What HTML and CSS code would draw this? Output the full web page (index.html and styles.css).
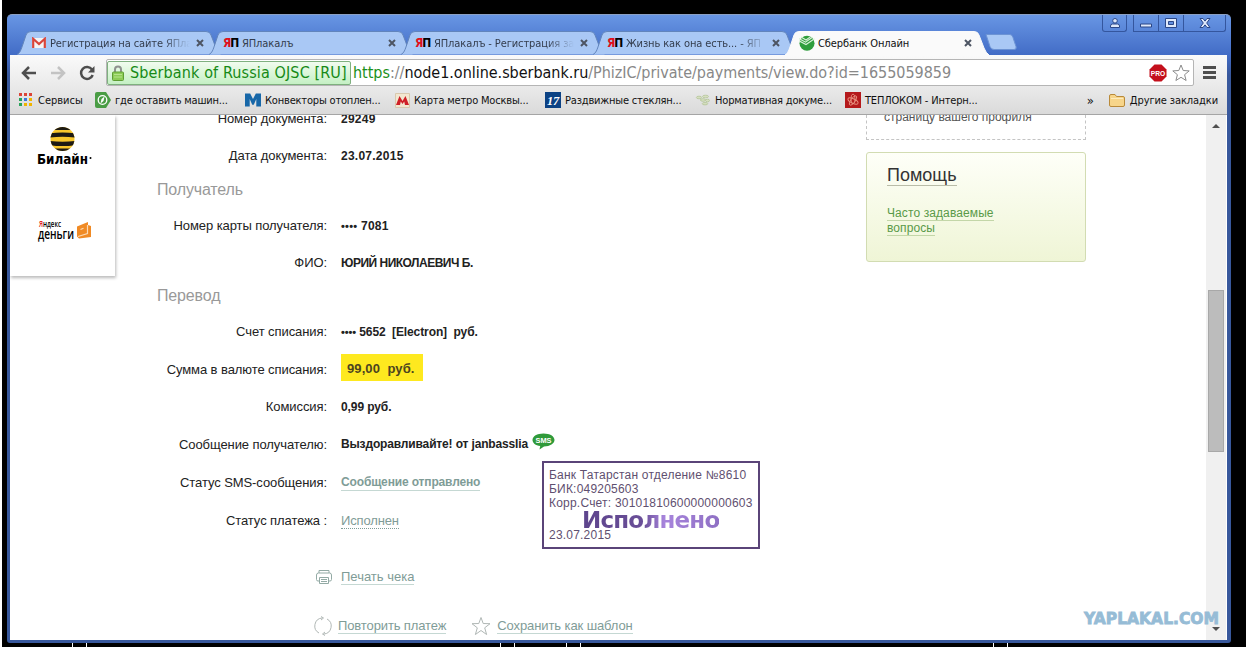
FILE: index.html
```html
<!DOCTYPE html>
<html lang="ru">
<head>
  <meta charset="UTF-8">
  <title>Сбербанк Онлайн</title>
  <link rel="stylesheet" href="styles.css">
</head>
<body>
  <div class="desktop">
    <div class="window">
      <header class="titlebar">
        <nav class="tabs">
          <div class="tab">
            <svg class="tab-bg" viewBox="0 0 206 24" width="206" height="24"><path d="M1 23.500C4 22 5 19 7 13L10 4Q11 .5 15 .5H190Q194 .5 195 4L200 17Q202 22 205 23.500"/></svg>
            <svg class="favicon" viewBox="0 0 14 12" width="14" height="12"><path fill="#f4f4f4" d="M0 1h14v10H0z"/><path fill="none" stroke="#d9453b" stroke-width="2.200" d="M1.200 11V1.800L7 7l5.800-5.200V11"/></svg>
            <span class="tab-title fade">Регистрация на сайте ЯПла</span>
            <svg class="close" viewBox="0 0 8 8" width="8" height="8"><path d="M1 1l6 6M7 1L1 7"/></svg>
          </div>
          <div class="tab">
            <svg class="tab-bg" viewBox="0 0 206 24" width="206" height="24"><path d="M1 23.500C4 22 5 19 7 13L10 4Q11 .5 15 .5H190Q194 .5 195 4L200 17Q202 22 205 23.500"/></svg>
            <span class="favicon yap"><b>Я</b>П</span>
            <span class="tab-title">ЯПлакалъ</span>
            <svg class="close" viewBox="0 0 8 8" width="8" height="8"><path d="M1 1l6 6M7 1L1 7"/></svg>
          </div>
          <div class="tab">
            <svg class="tab-bg" viewBox="0 0 206 24" width="206" height="24"><path d="M1 23.500C4 22 5 19 7 13L10 4Q11 .5 15 .5H190Q194 .5 195 4L200 17Q202 22 205 23.500"/></svg>
            <span class="favicon yap"><b>Я</b>П</span>
            <span class="tab-title fade">ЯПлакалъ - Регистрация за</span>
            <svg class="close" viewBox="0 0 8 8" width="8" height="8"><path d="M1 1l6 6M7 1L1 7"/></svg>
          </div>
          <div class="tab">
            <svg class="tab-bg" viewBox="0 0 206 24" width="206" height="24"><path d="M1 23.500C4 22 5 19 7 13L10 4Q11 .5 15 .5H190Q194 .5 195 4L200 17Q202 22 205 23.500"/></svg>
            <span class="favicon yap"><b>Я</b>П</span>
            <span class="tab-title fade">Жизнь как она есть... - ЯП</span>
            <svg class="close" viewBox="0 0 8 8" width="8" height="8"><path d="M1 1l6 6M7 1L1 7"/></svg>
          </div>
          <div class="tab active">
            <svg class="tab-bg" viewBox="0 0 206 24" width="206" height="24"><path d="M1 24C4 22 5 19 7 13L10 4Q11 .5 15 .5H190Q194 .5 195 4L200 17Q202 22 205 24"/></svg>
            <svg class="favicon" viewBox="0 0 16 16" width="16" height="16"><circle cx="8" cy="8.300" r="7.500" fill="#2f9e3d"/><path fill="none" stroke="#d8f0d8" stroke-width="1.100" d="M0 3.500l6.500 3.700 7-5M2 2l5 3 5-3.600M0 5.800l7 3.700 8.500-5.800"/></svg>
            <span class="tab-title">Сбербанк Онлайн</span>
            <svg class="close" viewBox="0 0 8 8" width="8" height="8"><path d="M1 1l6 6M7 1L1 7"/></svg>
          </div>
          <svg class="new-tab" viewBox="0 0 32 16" width="32" height="16"><path d="M1 .5h24q2 0 3 3l3 9q1 3-2 3H9q-3 0-4-3z"/></svg>
        </nav>
        <div class="controls">
          <span class="control user"><svg viewBox="0 0 10 10" width="10" height="10"><circle cx="5" cy="2.800" r="2.300"/><path d="M.5 9.500V8q0-2 2-2h5q2 0 2 2v1.500z"/></svg></span>
          <span class="control"><svg viewBox="0 0 12 10" width="12" height="10"><path d="M.5 6h11v3H.5z"/></svg></span>
          <span class="control"><svg viewBox="0 0 12 10" width="12" height="10"><path fill-rule="evenodd" d="M.5.500h11v9H.5zM3.500 3.500v3h5v-3z"/></svg></span>
          <span class="control last"><svg viewBox="0 0 12 10" width="12" height="10"><path d="M1 .5h3l2 2.600L8 .5h3L7.700 5 11 9.500H8L6 6.900 4 9.500H1L4.300 5z"/></svg></span>
        </div>
      </header>

      <div class="toolbar">
        <svg class="nav-icon back" viewBox="0 0 16 14" width="16" height="14"><path d="M15 7H2M8 1L2 7l6 6"/></svg>
        <svg class="nav-icon forward" viewBox="0 0 16 14" width="16" height="14"><path d="M1 7h13M8 1l6 6-6 6"/></svg>
        <svg class="nav-icon reload" viewBox="0 0 16 16" width="16" height="16"><path d="M13 4.500A6 6 0 1 0 13.700 10"/><path class="solid" d="M15.500 1v6.500H9z"/></svg>
        <div class="address">
          <span class="cert">
            <svg viewBox="0 0 12 16" width="12" height="16"><path fill="none" stroke="#8f938f" stroke-width="2" d="M3 8V4.500a3 3 0 0 1 6 0V8"/><rect x=".5" y="7" width="11" height="8.500" rx="1" fill="#8ccc55" stroke="#5e9e34"/><path stroke="#b5e38a" d="M2 9.500h8M2 12h8"/></svg>
            <span class="cert-name">Sberbank of Russia OJSC [RU]</span>
          </span>
          <span class="url"><span class="scheme">https</span><span class="slashes">://</span><span class="host">node1.online.sberbank.ru</span><span class="path">/PhizIC/private/payments/view.do?id=1655059859</span></span>
          <svg class="pro" viewBox="0 0 18 18" width="18" height="18"><path fill="#c4101c" d="M5.500.500h7l5 5v7l-5 5h-7l-5-5v-7z"/><text x="1.800" y="11.800" textLength="14.400" lengthAdjust="spacingAndGlyphs">PRO</text></svg>
          <svg class="star" viewBox="0 0 18 18" width="18" height="18"><path d="M9 1l2.200 5.500 6 .4-4.600 3.800 1.500 5.800L9 13.300l-5.100 3.200 1.500-5.800L.8 6.900l6-.4z"/></svg>
        </div>
        <div class="menu"><i></i><i></i><i></i></div>
      </div>

      <div class="bookmarks">
        <a class="mark apps"><svg viewBox="0 0 14 14" width="14" height="14"><path fill="#dc4437" d="M0 0h3v3H0zM5 0h3v3H5zM10 0h3v3h-3z"/><path fill="#29a35b" d="M0 5h3v3H0zM0 10h3v3H0z"/><path fill="#3b78d8" d="M5 5h3v3H5z"/><path fill="#f0b400" d="M10 5h3v3h-3zM5 10h3v3H5zM10 10h3v3h-3z"/></svg><span>Сервисы</span></a>
        <a class="mark"><svg viewBox="0 0 16 16" width="16" height="16"><path fill="#4a9d45" d="M2 0h9l5 8-5 8H2q-2 0-2-2V2q0-2 2-2z"/><circle cx="7.500" cy="8" r="4.300" fill="none" stroke="#fff" stroke-width="1.300"/><path fill="#fff" d="M9.500 4.500L8.500 9l-3 2.500 1-4.500z"/></svg><span>где оставить машин...</span></a>
        <a class="mark"><svg viewBox="0 0 17 14" width="16" height="14"><path fill="#1767a8" d="M0 0h5.500l3 6 3-6H17v14h-5V6l-2.700 6H7.700L5 6v8H0z"/></svg><span>Конвекторы отоплен...</span></a>
        <a class="mark"><svg viewBox="0 0 15 15" width="15" height="15"><path fill="#f2e7d0" stroke="#d8c8ae" d="M.5.500h14v14H.5z"/><path fill="#cf2027" d="M1 12l3.500-9L7.500 8l3-5L14 12h-4l-.8-3.500L7.500 11 5.800 8.500 5 12z"/></svg><span>Карта метро Москвы...</span></a>
        <a class="mark"><svg viewBox="0 0 16 16" width="16" height="16"><path fill="#0c4284" d="M0 0h16v16H0z"/><text class="seventeen" x="2" y="12.500" textLength="12" lengthAdjust="spacingAndGlyphs">17</text></svg><span>Раздвижные стеклян...</span></a>
        <a class="mark"><svg viewBox="0 0 16 12" width="16" height="12"><g fill="#d6dfc0" stroke="#b4c598" stroke-width=".8"><ellipse cx="4" cy="3.500" rx="2.600" ry="1.300"/><ellipse cx="10.500" cy="2.500" rx="3" ry="1.300"/><ellipse cx="8" cy="6" rx="2.600" ry="1.300"/><ellipse cx="12.500" cy="6.500" rx="2" ry="1.300"/><ellipse cx="10" cy="9.700" rx="2.800" ry="1.200"/></g></svg><span>Нормативная докуме...</span></a>
        <a class="mark"><svg viewBox="0 0 16 16" width="16" height="16"><path fill="#b51a1c" d="M0 0h16v16H0z"/><g fill="none" stroke="#e8907f" stroke-width=".9"><ellipse cx="8" cy="9" rx="5.500" ry="2.200" transform="rotate(25 8 9)"/><ellipse cx="8" cy="8.500" rx="5.500" ry="2.200" transform="rotate(-55 8 8.500)"/><ellipse cx="8" cy="7" rx="2" ry="5"/></g></svg><span>ТЕПЛОКОМ - Интерн...</span></a>
        <span class="more">»</span>
        <a class="mark other"><svg viewBox="0 0 16 13" width="16" height="13"><path fill="#f7d58a" stroke="#b98a3a" d="M.5 11V2Q.5.500 2 .5h4l1.500 2H14q1.500 0 1.500 1.500v7q0 1.500-1.500 1.500H2Q.5 12.500.5 11z"/><path stroke="#fdebbd" d="M2 4.500h12"/></svg><span>Другие закладки</span></a>
      </div>

      <div class="page">
        <aside class="partners">
          <svg viewBox="0 0 60 42" width="60" height="42">
            <defs><clipPath id="ball"><circle cx="25.500" cy="12" r="12"/></clipPath></defs>
            <g clip-path="url(#ball)"><path fill="#f8c72c" d="M12 0h27v25H12z"/><path fill="#1d1a14" d="M12 0h27v3H12zM12 6.500q13.500-2 27 0v4q-13.500-1.500-27 0zM12 14q13.500 1.500 27 0v4q-13.500 2-27 0zM12 21.500h27v3H12z"/></g>
            <text class="beeline" x="0" y="37" textLength="51" lengthAdjust="spacingAndGlyphs">Билайн</text><circle cx="53.500" cy="31" r="1"/>
          </svg>
          <svg class="yandex" viewBox="0 0 60 26" width="60" height="26">
            <text class="ya" x="2" y="8.500" textLength="22" lengthAdjust="spacingAndGlyphs"><tspan fill="#e02020">Я</tspan>ндекс</text>
            <text class="money" x="1" y="20.500" textLength="36" lengthAdjust="spacingAndGlyphs">деньги</text>
            <path fill="#f08a24" d="M40 8.500L51 4v3l3 1v11l-12 1.500-2-2z"/><path fill="none" stroke="#fbd9b5" stroke-width="1.200" d="M41 18.500l9.500-3V7M43.500 11.500l3-1.300"/>
          </svg>
        </aside>

        <main class="form">
          <div class="row"><label>Номер документа:</label><b class="digits">29249</b></div>
          <div class="row"><label>Дата документа:</label><b class="digits">23.07.2015</b></div>
          <h2>Получатель</h2>
          <div class="row"><label>Номер карты получателя:</label><b class="digits"><i class="dots">••••</i> 7081</b></div>
          <div class="row"><label>ФИО:</label><b class="name">ЮРИЙ НИКОЛАЕВИЧ Б.</b></div>
          <h2 class="second">Перевод</h2>
          <div class="row"><label>Счет списания:</label><b class="account"><i class="dots">••••</i> 5652&nbsp; [Electron]&nbsp; руб.</b></div>
          <div class="row tall"><label>Сумма в валюте списания:</label><b class="sum">99,00&nbsp; руб.</b></div>
          <div class="row"><label>Комиссия:</label><b class="account">0,99 руб.</b></div>
          <div class="row tall"><label>Сообщение получателю:</label><b class="message">Выздоравливайте! от janbasslia</b>
            <svg class="sms" viewBox="0 0 23 17" width="23" height="17"><path fill="#2f9a3a" d="M11.500.500C18 .5 22.500 3.300 22.500 7S18 13.300 12 13.400L7.500 16.500l.7-3.500C3.500 12.400.5 10 .5 7 .5 3.300 5 .5 11.500.500z"/><text x="3.500" y="9.800" textLength="16" lengthAdjust="spacingAndGlyphs">SMS</text></svg></div>
          <div class="row tall"><label>Статус SMS-сообщения:</label><b class="link message sent">Сообщение отправлено</b></div>
          <div class="row status"><label>Статус платежа :</label><span class="link dotted">Исполнен</span></div>
          <div class="actions print">
            <svg viewBox="0 0 16 14" width="16" height="14"><path d="M3 3V.5h10V3M3 11H2Q.5 11 .5 9.500V5Q.5 3 2.500 3h11q2 0 2 2v4.500Q15.500 11 14 11h-1M3.500 7.500h9v6h-9zM5 9.500h6M5 11.500h6"/></svg>
            <span class="link">Печать чека</span>
          </div>
          <div class="actions">
            <svg viewBox="0 0 18 20" width="18" height="20"><path d="M8 2A8 8 0 0 0 5 17M10 18A8 8 0 0 0 13 3M7 .5L9.500 2 7 4M11 16l-2.500 2 2.500 1.500"/></svg>
            <span class="link repeat">Повторить платеж</span>
            <svg viewBox="0 0 20 20" width="20" height="20"><path d="M10 1.500l2.200 6 6.800.2-5.300 4.100 1.900 6.700-5.600-4-5.600 4 1.900-6.700L1 7.700l6.800-.2z"/></svg>
            <span class="link save">Сохранить как шаблон</span>
          </div>
          <div class="stamp">
            <span>Банк Татарстан отделение №8610</span>
            <span>БИК:049205603</span>
            <span>Корр.Счет: 30101810600000000603</span>
            <strong>Исполнено</strong>
            <span class="date">23.07.2015</span>
          </div>
        </main>

        <aside class="right">
          <div class="profile"><span>страницу вашего профиля</span></div>
          <div class="help">
            <h3><span>Помощь</span></h3>
            <a class="faq">Часто задаваемые вопросы</a>
          </div>
        </aside>

        <div class="scrollbar"><i class="up"></i><div class="thumb"></div><i class="down"></i></div>
        <svg class="watermark" viewBox="0 0 138 16" width="138" height="16"><text x="1" y="13" textLength="135" lengthAdjust="spacingAndGlyphs">YAPLAKAL.COM</text></svg>
      </div>
    </div>
    <div class="ticks"><i></i><i></i><i></i><i></i><i></i><i></i><i></i><i></i></div>
  </div>
</body>
</html>
```
FILE: styles.css
```css
* {
  box-sizing: border-box;
}

body {
  margin: 0;
  height: 648px;
  padding-left: 2px;
  background: #fff;
  font-family: 'Liberation Sans', Arial, sans-serif;
  font-size: 13px;
  color: #222;
  overflow: hidden;
}

.desktop {
  height: 647px;
  padding: 14px 0 0 5px;
  background: #000;
}

.window {
  width: 1224px;
  height: 629px;
  padding: 0 4px 4px 3px;
  border-radius: 5px 5px 3px 3px;
  background: linear-gradient(#6896e4, #426cc6 40px, #38589c 60px, #38589c);
  border-top: 1px solid #8ba0c4;
}

/* title bar */
.titlebar {
  display: flex;
  justify-content: space-between;
  height: 40px;
}

.tabs {
  display: flex;
  align-items: flex-end;
  padding-left: 6px;
}

.tab {
  position: relative;
  display: flex;
  align-items: center;
  width: 192px;
  height: 24px;
  padding-left: 15px;
  font: 11px 'DejaVu Sans Condensed', 'DejaVu Sans', sans-serif;
  letter-spacing: -0.1px;
  color: #333c4c;
}

.tab-bg {
  position: absolute;
  left: 0;
  top: 0;
  fill: #a9c8f5;
  stroke: #6285bc;
}

.active {
  z-index: 1;
  color: #111;
}

.active .tab-bg {
  fill: #fafafa;
  stroke: #fafafa;
}

.favicon {
  position: relative;
  flex: none;
  width: 16px;
}

.yap {
  font: bold 12px 'DejaVu Sans Condensed', sans-serif;
  letter-spacing: -1px;
  color: #000;
}

.yap b {
  color: #e0101c;
}

.tab-title {
  position: relative;
  width: 142px;
  margin-left: 3px;
  white-space: nowrap;
}

.fade {
  -webkit-mask-image: linear-gradient(to right, #000 112px, transparent 140px);
  mask-image: linear-gradient(to right, #000 112px, transparent 140px);
}

.close {
  position: relative;
  margin-left: 4px;
  fill: none;
  stroke: #4d5563;
  stroke-width: 2;
}

.new-tab {
  margin: 0 0 5px 9px;
  fill: #a9c8f5;
  stroke: #6c93d4;
}

.controls {
  display: flex;
  height: 17px;
  margin-right: 1px;
}

.control {
  display: flex;
  align-items: center;
  justify-content: center;
  width: 25px;
  border: 1px solid #34569e;
  border-width: 0 0 1px 1px;
}

.control svg {
  fill: #dfe9fa;
  stroke: #2b4787;
}

.user {
  margin-right: 6px;
  border-right-width: 1px;
  border-radius: 0 0 3px 3px;
}

.last {
  width: 43px;
  border-right-width: 1px;
  border-radius: 0 0 3px 0;
}

/* toolbar */
.toolbar {
  display: flex;
  align-items: center;
  height: 33px;
  padding: 2px 6px 0 11px;
  background: linear-gradient(#fafafa, #e9e9e9);
}

.nav-icon {
  margin-right: 13px;
  fill: none;
  stroke: #4e4e4e;
  stroke-width: 2.5;
}

.forward {
  stroke: #c3c3c3;
}

.reload {
  margin-right: 11px;
}

.solid {
  fill: #4e4e4e;
  stroke: none;
}

.address {
  display: flex;
  align-items: center;
  width: 1088px;
  height: 27px;
  border: 1px solid #b5b5b5;
  border-radius: 2px;
  background: #fff;
  font: 16px 'DejaVu Sans Condensed', 'DejaVu Sans', sans-serif;
  white-space: nowrap;
}

.cert {
  display: flex;
  align-items: center;
  gap: 6px;
  width: 244px;
  height: 24px;
  padding-left: 4px;
  border: 1px solid #7fb07f;
  border-radius: 2px;
  background: linear-gradient(#f1fcef, #c5f0c4);
  letter-spacing: 0.12px;
  color: #168a16;
}

.url {
  flex: 1;
  margin-left: 2px;
  letter-spacing: -0.03px;
  color: #888;
}

.scheme {
  color: #1a8f1a;
}

.host {
  color: #111;
}

.pro {
  margin-right: 5px;
}

.pro text {
  font: bold 7px 'Liberation Sans', sans-serif;
  fill: #fff;
}

.star {
  margin-right: 3px;
  fill: #fff;
  stroke: #8b8b8b;
}

.menu {
  margin-left: 9px;
}

.menu i {
  display: block;
  width: 13px;
  height: 3px;
  margin: 2px 0;
  background: #4f4f4f;
}

/* bookmarks */
.bookmarks {
  display: flex;
  align-items: center;
  height: 27px;
  padding: 0 9px 2px 9px;
  background: linear-gradient(#e9e9e9, #dadada);
  border-bottom: 1px solid #a5a5a5;
  font: 11px 'DejaVu Sans Condensed', 'DejaVu Sans', sans-serif;
  letter-spacing: -0.18px;
  color: #111;
}

.mark {
  display: flex;
  align-items: center;
  gap: 4px;
  width: 150px;
  white-space: nowrap;
}

.mark svg {
  flex: none;
}

.apps {
  gap: 5px;
  width: 76px;
  letter-spacing: 0;
}

.seventeen {
  font: italic bold 12px 'Liberation Serif', serif;
  fill: #fff;
}

.more {
  margin-left: auto;
  margin-right: 15px;
  font-size: 13px;
}

.other {
  gap: 5px;
  width: auto;
  letter-spacing: -0.1px;
}

/* page */
.page {
  position: relative;
  display: flex;
  height: 525px;
  background: #fff;
  overflow: hidden;
}

.partners {
  display: flex;
  flex-direction: column;
  width: 105px;
  height: 161px;
  padding: 12px 0 0 27px;
  box-shadow: 1px 2px 3px #bbb;
}

.beeline {
  font: bold 14px 'DejaVu Sans', sans-serif;
}

.yandex {
  margin-top: 49px;
}

.ya {
  font: 600 9px 'Open Sans', sans-serif;
}

.money {
  font: 600 15px 'Open Sans', sans-serif;
}

.form {
  position: relative;
  width: 751px;
  margin-top: -15px;
  padding-left: 42px;
}

.row {
  display: flex;
  align-items: center;
  height: 37px;
}

.tall {
  height: 38px;
}

.status {
  height: 39px;
}

.row label {
  width: 170px;
  margin-right: 14px;
  text-align: right;
  letter-spacing: -0.08px;
  white-space: nowrap;
}

.row b {
  font-size: 12px;
}

.row .digits {
  letter-spacing: 0.25px;
}

.row .name {
  letter-spacing: -0.5px;
}

.row .account {
  letter-spacing: -0.1px;
}

.row .message {
  letter-spacing: -0.15px;
}

.dots {
  font-style: normal;
  font-size: 11px;
}

h2 {
  height: 33px;
  margin: 0;
  font-size: 16px;
  line-height: 32px;
  font-weight: normal;
  letter-spacing: -0.15px;
  color: #999;
}

.second {
  height: 32px;
  line-height: 30px;
}

.row .sum {
  height: 27px;
  margin-top: -3px;
  padding: 0 8px 0 6px;
  background: #fee91f;
  font-size: 13px;
  line-height: 30px;
  letter-spacing: 0.1px;
  color: #4c4420;
}

.sms {
  margin: -6px 0 0 4px;
}

.sms text {
  font: bold 8px 'Liberation Sans', sans-serif;
  fill: #fff;
}

.link {
  color: #7f9c97;
  border-bottom: 1px solid #c5d8d3;
  line-height: 15px;
}

.sent {
  margin-top: 2px;
}

.dotted {
  border-bottom: 1px dotted #7f9c97;
  letter-spacing: -0.15px;
}

.actions {
  display: flex;
  align-items: center;
  height: 37px;
  margin-top: 12px;
  padding-left: 157px;
}

.actions svg {
  margin-right: 6px;
  fill: none;
  stroke: #b0b7b5;
}

.print {
  margin-top: 18px;
  padding-left: 159px;
}

.print svg {
  margin-right: 9px;
  stroke: #93aaa5;
}

.repeat {
  margin-right: 25px;
  letter-spacing: -0.12px;
}

.save {
  letter-spacing: -0.1px;
}

.stamp {
  position: absolute;
  left: 427px;
  top: 361px;
  display: flex;
  flex-direction: column;
  width: 218px;
  height: 88px;
  padding: 5px 0 0 5px;
  border: 2px solid #5a4478;
  font-size: 12px;
  line-height: 14px;
  letter-spacing: 0.21px;
  color: #5f5070;
  white-space: nowrap;
}

.stamp strong {
  align-self: flex-start;
  height: 20px;
  margin: 0 0 -2px 33px;
  font: bold 23px/20px 'DejaVu Sans', sans-serif;
  letter-spacing: -0.8px;
  background: linear-gradient(to right, #5d448c, #6a4f98 45%, #a784dc 60%, #8f70c4);
  -webkit-background-clip: text;
  background-clip: text;
  color: transparent;
}

.right {
  width: 220px;
}

.profile {
  height: 25px;
  padding-left: 17px;
  border: 1px dashed #c4c4c4;
  border-top: 0;
  font-size: 12px;
  line-height: 5px;
  color: #555;
}

.help {
  height: 110px;
  margin-top: 12px;
  padding: 12px 80px 12px 20px;
  border: 1px solid #d2dcb2;
  border-radius: 3px;
  background: linear-gradient(#fefff8, #eff5d6);
}

h3 {
  margin: 0 0 19px;
  font-size: 18px;
  font-weight: normal;
  line-height: 20px;
  color: #333;
}

h3 span {
  display: inline-block;
  border-bottom: 1px solid #b9bca8;
}

.faq {
  font-size: 12px;
  line-height: 14px;
  letter-spacing: 0.1px;
  color: #5a9a48;
  border-bottom: 1px solid #c3d6a8;
}

.scrollbar {
  display: flex;
  flex-direction: column;
  align-items: center;
  width: 20px;
  height: 525px;
  margin-left: 120px;
  padding: 9px 1px;
  background: #f0f0f0;
}

.up,
.down {
  border: 4px solid transparent;
  border-top: 0;
  border-bottom-color: #505050;
}

.down {
  margin-top: auto;
  border-top: 4px solid #505050;
  border-bottom: 0;
}

.thumb {
  width: 16px;
  height: 162px;
  margin-top: 162px;
  border: 1px solid #a8a8a8;
  background: #bcbcbc;
}

.watermark {
  position: absolute;
  left: 1073px;
  top: 496px;
}

.watermark text {
  font: bold 15px 'DejaVu Sans', sans-serif;
  fill: #96bcd6;
  stroke: #96bcd6;
  stroke-width: 0.8;
}

/* marks under the window */
.ticks {
  display: flex;
  gap: 13px;
  height: 4px;
  padding-left: 65px;
}

.ticks i {
  width: 1px;
  background: #fff;
}

.ticks i:nth-child(3) {
  margin-left: 400px;
}

.ticks i:nth-child(5) {
  margin-left: 38px;
}

.ticks i:nth-child(7) {
  margin-left: 399px;
}
```
